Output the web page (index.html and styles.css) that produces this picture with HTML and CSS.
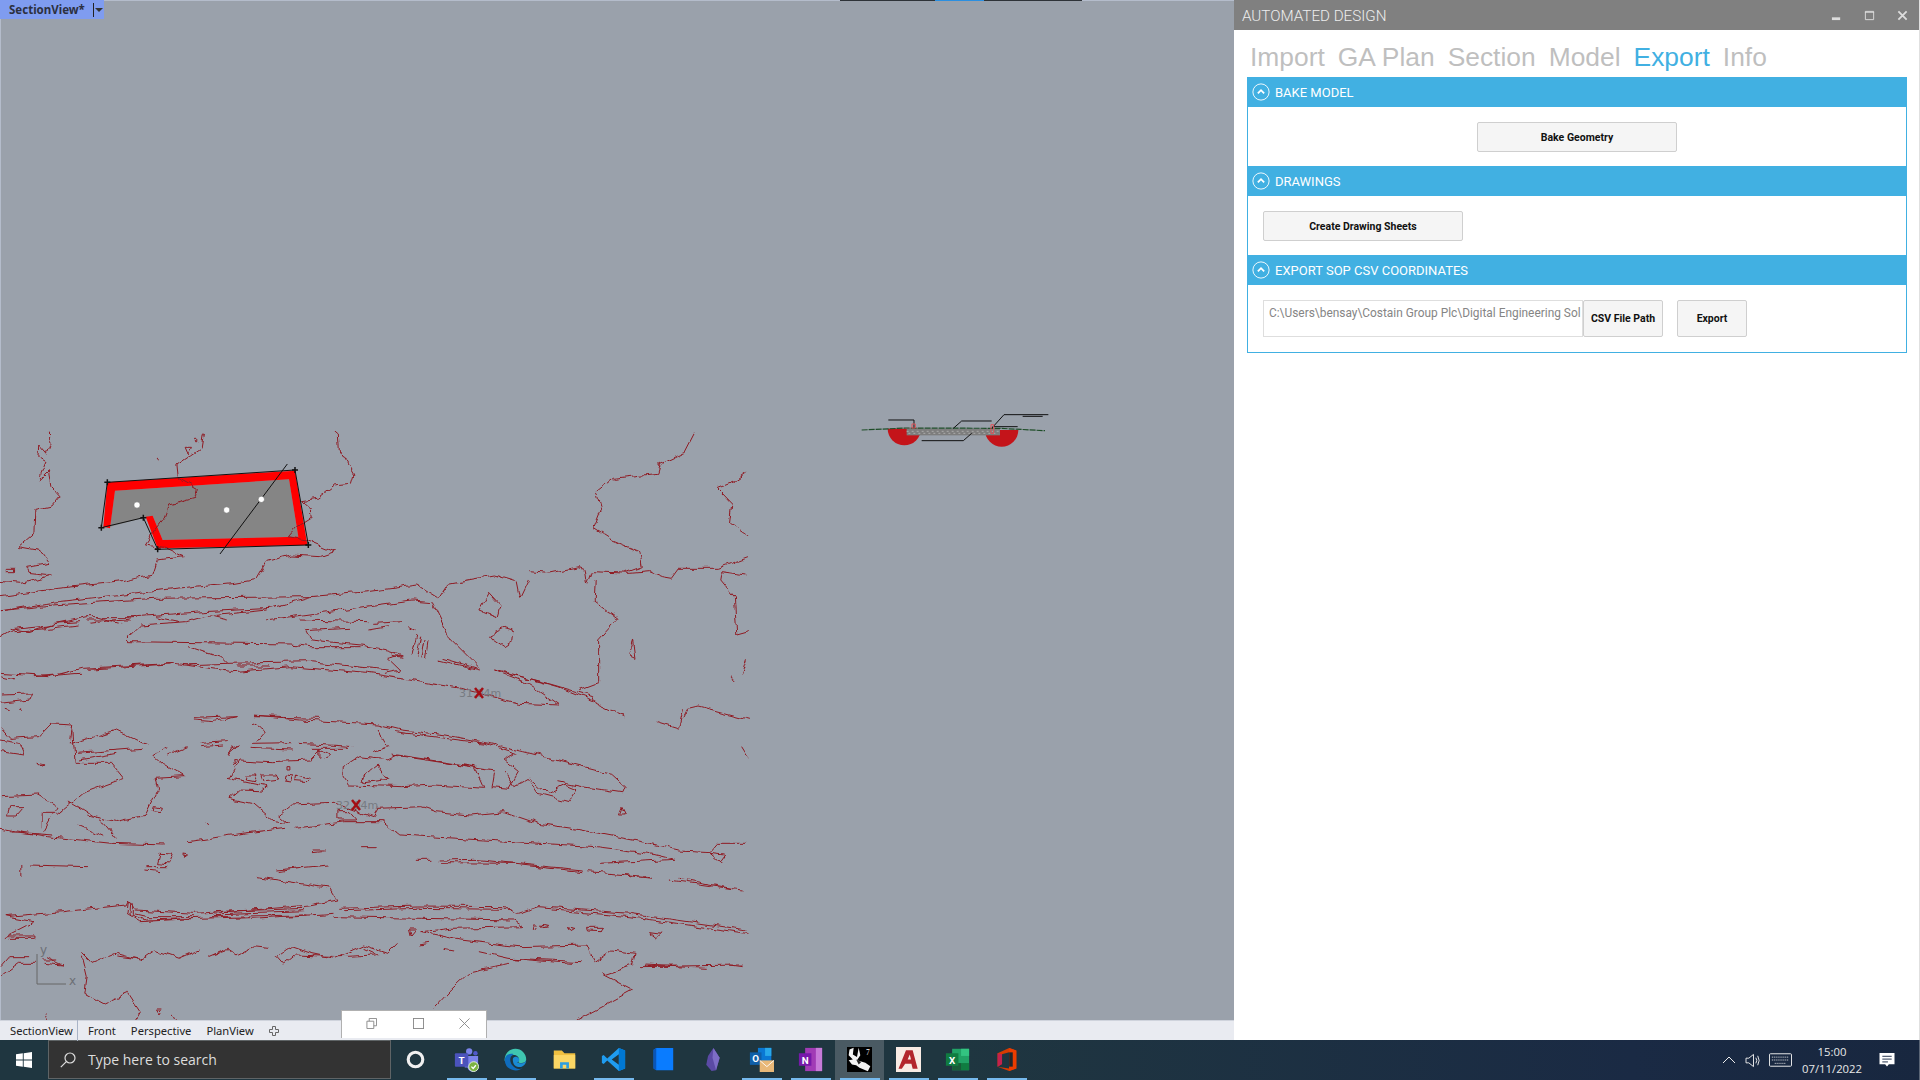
FILE: index.html
```html
<!DOCTYPE html>
<html lang="en">
<head>
<meta charset="utf-8">
<title>Automated Design</title>
<link rel="stylesheet" href="styles.css">
</head>
<body>
<div class="app">
  <div class="work">
    <section class="viewport">
      <div class="canvas">
        <svg class="scene" viewBox="0 0 1234 1020" xmlns="http://www.w3.org/2000/svg">
          <defs>
            <filter id="wobble" filterUnits="userSpaceOnUse" x="0" y="400" width="760" height="630" color-interpolation-filters="sRGB">
              <feTurbulence type="fractalNoise" baseFrequency="0.09" numOctaves="2" seed="4" result="n"/>
              <feDisplacementMap in="SourceGraphic" in2="n" scale="7" xChannelSelector="R" yChannelSelector="G"/>
            </filter>
          </defs>
          <!-- polygon -->
          <g transform="translate(0 420) scale(.33333)">
            <polygon class="poly-fill" points="345,212 867,178 895,350 488,360 458,287 430,293 330,320"/>
            <polygon class="poly-red" points="322,187 885,152 922,375 473,385 437,290 458,287 488,360 895,350 867,178 345,212 330,325 310,320"/>
          </g>
          <g class="wobbly">
          <!-- contours from upper crop -->
          <g transform="translate(0 420) scale(.48473 .33333)" class="contour">
            <path d="M102,38 L103,70 L95,100 L80,75 L78,110 L95,125 L85,160 L82,183 L100,158 L105,200 L122,228 L105,258 L72,268 L70,340 L38,380 L85,392 L104,430 L55,442 L60,457 L108,465 L70,480 L45,490 L2,484"/>
            <path d="M15,445 L30,445 L30,455 L15,455 Z"/>
            <path d="M420,38 L415,85 L395,105 L365,135 L368,175 L405,205 L400,235 L350,255 L340,295 L318,335 L300,375 L340,385 L378,410 L325,420 L315,465 L250,485 L120,505 L2,530"/>
            <path d="M382,85 L395,85 L388,105 Z M403,58 L408,58 L408,68 L403,68 Z M323,115 L328,125"/>
            <path d="M690,35 L698,45 L700,90 L730,165 L725,190 L690,195 L655,235 L622,242 L640,265 L642,295 L610,325 L595,350 L632,360 L690,395 L660,410 L600,405 L550,425 L530,475 L480,488 L330,510 L120,545 L2,572"/>
            <path d="M1432,38 L1410,100 L1360,135 L1355,160 L1265,175 L1230,215 L1240,270 L1225,325 L1262,360 L1320,395 L1325,440 L1290,458"/>
            <path d="M1092,455 L1130,460 L1195,440 L1205,445 L1210,495 L1220,455 L1300,460 L1340,455 L1365,470 L1385,475 L1400,445 L1480,445 L1545,410"/>
            <path d="M1230,475 L1228,545 L1275,595 L1235,660 L1235,790 L1195,812"/>
            <path d="M1540,160 L1515,185 L1480,205 L1510,250 L1505,310 L1545,350"/>
            <path d="M1490,455 L1540,465 M1490,455 L1487,480 L1515,530 L1520,645 L1545,635"/>
            <path d="M2,572 L110,555 L320,535 L640,530 L760,515 L860,495 L905,535 L925,490 L1020,465 L1065,485 L1072,535 L1090,480"/>
            <path d="M2,650 L30,625 L100,615 L150,600 L180,590 L280,590 L420,575 L560,565 L640,530"/>
            <path d="M550,600 L700,570 L850,540 L890,545 L925,650 L990,745"/>
            <path d="M265,650 L290,615 L385,605 L420,590 L550,570 M265,650 L265,665 L600,672 L640,680 L745,680"/>
            <path d="M390,680 L460,715 L470,730 L640,725 L800,750 M630,632 L640,660 L745,675 L800,690 L830,705 L800,715 L825,750 L790,760"/>
            <path d="M2,760 L100,770 L170,745 L360,730 L480,755 L600,740 L760,760 L950,805 L1070,850 L1155,855 L1090,790 L1020,750"/>
            <path d="M1020,750 L1130,790 L1225,830 L1230,850 L1290,890 M1040,755 L1150,800 L1230,845"/>
            <path d="M1010,520 L990,570 L1025,590 L1032,555 Z M1010,645 L1040,625 L1062,635 L1060,660 L1040,680 L1015,655 Z M1305,660 L1295,705 L1310,715 Z"/>
            <path d="M1410,895 L1420,865 L1440,858 L1545,898 M1530,760 L1540,715 M1505,770 L1518,780"/>
            <path d="M20,625 L60,635 L110,610 L165,605 M30,635 L100,625 L160,615 M180,600 L270,600 M185,610 L280,592 M200,590 L250,612 M320,590 L370,605 M440,590 L470,600"/>
            <path d="M620,600 L760,605 M770,610 L830,605 M760,630 L800,620 M840,620 L855,632 M630,632 L720,625"/>
            <path d="M860,645 L850,705 M868,650 L860,710 M877,655 L870,715 M885,660 L880,715 M905,720 L990,750 M915,715 L985,745 M810,705 L830,712"/>
            <path d="M2,770 L30,780 M70,770 L165,760 M180,748 L350,732 M375,735 L470,730 M490,738 L555,738"/>
            <path d="M2,825 L65,822 L60,840 L2,850 M10,868 L20,872 M40,865 L45,872 M400,895 L490,890 M520,890 L660,895"/>
          </g>
          <!-- contours from lower crop -->
          <g transform="translate(0 700) scale(.48473 .33333)" class="contour">
            <path d="M2,85 L20,115 L80,110 L105,72 L150,75 L145,130 M2,120 L40,130 L50,165 L2,155"/>
            <path d="M400,60 L440,65 L490,50 M520,48 L620,60 L780,72 L830,90 L920,105 L1010,130 L1080,155 L1260,220 L1290,260 L1285,278 L1200,260 L1150,245"/>
            <path d="M1060,160 L1040,180 L1070,215 L1050,265 L1015,260 L1020,215"/>
            <path d="M1040,215 L1060,260 L1090,235 L1110,280 L1175,305 L1190,270 L1165,255 L1130,280 L1095,235"/>
            <path d="M520,70 L548,95 L530,125 M780,90 L800,140 L770,155 M815,95 L1000,130 L1065,160"/>
            <path d="M415,130 L470,125 M415,140 L460,135 M520,130 L600,128 M515,145 L600,150 M615,130 L680,135 L730,140 M640,145 L720,145 M660,145 L660,175"/>
            <path d="M470,240 L495,180 L560,185 L640,180 L660,150 L680,165 L670,180 M470,165 L480,140 L490,135 L470,160"/>
            <path d="M510,225 L530,225 L525,245 L508,240 Z M540,225 L570,225 L575,240 L545,245 Z M590,225 L605,228 L600,243 L588,240 Z M612,225 L640,235 L635,245 L610,242 Z M590,200 L598,200 L598,210 L590,210 Z M480,185 L488,185 L482,197 Z"/>
            <path d="M470,235 L550,260 L540,272 L490,270 L470,295 L520,310 L565,365 L595,370 L575,345 L600,315 L690,310 L770,350 L780,325 L870,320 L900,335 L970,345 L1040,335 L1110,370 L1180,385 L1270,410 L1340,430 L1400,450 L1465,455 L1480,430 L1540,430"/>
            <path d="M1465,460 L1485,485 L1495,465 Z M2,385 L100,410 L230,430 L340,435 M390,425 L500,400 L590,385 M610,385 L710,365 L790,365 L825,405 L1000,420 L1230,440 L1340,460 L1390,478"/>
            <path d="M695,335 L720,335 L735,360 L695,360 Z"/>
            <path d="M708,200 L740,170 L800,180 L820,165 L980,200 L1000,265 L900,255 L830,260 L720,255 L708,230 Z M740,240 L780,195 L800,235 L750,245 Z M810,165 L1020,210"/>
            <path d="M150,90 L155,190 L230,190 L255,235 L170,280 L145,310 L120,340 L85,340 L85,385 M150,130 L240,90 L305,135 M160,160 L290,145 M165,180 L240,160"/>
            <path d="M345,140 L315,165 L335,190 L380,230 L320,235 L325,270 L300,345 L240,365 L180,345 M385,140 L345,165"/>
            <path d="M2,290 L80,285 L120,320 L90,395 M140,300 L175,330 L215,370 L240,415 M160,375 L215,410 M20,395 L110,405 M20,320 L50,320 L35,345 L15,345 Z"/>
            <path d="M78,190 L95,195 L85,198 Z M318,320 L335,325 L332,338 L316,335 Z M425,368 L430,378 M1283,325 L1290,345 L1278,345 Z"/>
            <path d="M330,460 L358,462 L350,492 L325,488 Z M375,462 L387,465 L380,472 Z"/>
            <path d="M645,450 L670,450 M645,458 L665,455 M745,440 L775,440 M45,495 L45,530 M60,495 L180,500 M300,500 L345,500 M300,510 L330,515"/>
            <path d="M860,478 L890,478 M905,480 L980,478 L1200,510 M910,488 L1060,490 M1075,495 L1200,515 M1240,490 L1390,478 M1210,515 L1340,530 M1285,525 L1345,535 M1380,540 L1530,570 M1400,535 L1510,565 M570,510 L680,495 M575,515 L620,505"/>
            <path d="M530,530 L680,565 L695,600 L640,615 L520,630 L400,640 L280,630 L265,600 L260,615 L130,635 L10,650 L70,665 L10,710 M20,705 L70,705 L70,712 L20,712"/>
            <path d="M265,600 L262,640 L290,665 L400,655 M270,605 L268,642 L300,660 L520,650 M275,610 L275,640 L305,650 L400,650"/>
            <path d="M440,635 L630,625 M440,642 L630,632 M430,650 L630,645 M520,655 L690,640"/>
            <path d="M700,625 L860,618 L1040,620 L1070,640 L1110,620 L1300,640 L1540,690 M710,632 L860,625 L1050,628 M1140,630 L1300,650 L1540,700"/>
            <path d="M690,650 L870,655 L1060,660 L1080,680 L930,685 L870,695 L950,720 L1070,740 L1210,735 L1225,785 L1260,750 L1310,760 L1305,795 L1245,825 L1305,870 L1190,960"/>
            <path d="M1100,675 L1108,675 L1105,688 L1098,685 Z M1115,675 L1130,680 L1120,683 Z M1168,680 L1188,685 L1180,692 Z M1208,685 L1245,685 L1240,695 L1210,693 Z M1340,698 L1365,703 L1355,715 Z M845,690 L858,690 L848,708 Z"/>
            <path d="M1320,800 L1530,795 M1330,795 L1460,805 M1505,795 L1530,800 M990,755 L1050,775 L1180,790 M1060,775 L1200,785 M1050,790 L970,815 L930,870 L895,925"/>
            <path d="M170,760 L190,790 L240,760 L290,780 L320,750 L370,775 L410,750 M430,770 L470,745 L490,765 L525,740 L555,745"/>
            <path d="M570,770 L600,740 L640,760 L690,775 L750,735 L800,760 L820,730 M570,770 L585,795 L610,765 L700,770 L775,765 M240,768 L295,778 M440,765 L470,750 M750,745 L780,765"/>
            <path d="M170,770 L180,830 L175,880 L215,912 L265,880 L290,935 L280,960 M2,800 L20,770 L60,770 M2,830 L40,790 L70,790 M95,940 L100,960 M90,790 L130,795 L95,770 M85,780 L120,780 M325,930 L335,930 L330,942 Z M350,945 L365,955"/>
            <path d="M1410,25 L1400,85 L1355,65 M1530,140 L1545,175"/>
            <path d="M865,735 L885,730 M915,745 L935,750"/>
          </g>
          </g>
          <!-- polygon outline on top -->
          <g transform="translate(0 420) scale(.33333)">
            <polygon class="poly-line" points="322,187 885,150 925,375 473,388 430,293 304,323"/>
            <line class="poly-line" x1="862" y1="132" x2="660" y2="402"/>
            <circle class="dot" cx="411" cy="255" r="9.500"/>
            <circle class="dot" cx="680" cy="270" r="9.500"/>
            <circle class="dot" cx="784" cy="238" r="9.500"/>
            <path class="grip" d="M322,178 v18 M313,187 h18 M885,141 v18 M876,150 h18 M925,366 v18 M916,375 h18 M473,379 v18 M464,388 h18 M430,284 v18 M421,293 h18 M304,314 v18 M295,323 h18"/>
          </g>
          <!-- cross section -->
          <g transform="translate(840 400) scale(.33333)">
            <path class="section-red" d="M143,86 H243 A50,50 0 0 1 143,86 Z"/>
            <path class="section-red" d="M435,90 H535 A50,50 0 0 1 435,90 Z"/>
            <rect class="section-grey" x="200" y="86" width="280" height="20"/>
            <path class="section-dash" d="M200,94 H480 M205,100 H470"/>
            <path class="section-green" d="M65,90 L200,84 L480,85 L615,92"/>
            <path class="section-black" d="M145,60 H222 V85 M340,85 L365,63 H455 M245,122 H370 L395,100 M455,85 L492,44 H625 M548,49 H608 M458,80 H533"/>
            <rect class="section-mark" x="216" y="72" width="10" height="12"/>
            <rect class="section-mark" x="453" y="74" width="8" height="26"/>
          </g>
          <!-- axis and dimension marks -->
          <path class="axis" d="M37,954 V984 H66"/>
          <text class="axis-label" x="40" y="954">y</text>
          <text class="axis-label" x="69" y="985">x</text>
          <text class="ghost" x="459" y="697">31.04m</text>
          <text class="ghost" x="336" y="809">32.04m</text>
          <path class="mark" d="M475,688 L483,698 M483,688 L475,698"/>
          <path class="mark" d="M352,800 L360,810 M360,800 L352,810"/>
        </svg>
        <div class="view-tag"><span>SectionView*</span><i class="view-sep"></i><i class="view-arrow"></i></div>
      </div>
      <nav class="view-tabs">
        <span class="view-tab view-tab-on">SectionView</span>
        <span class="view-tab">Front</span>
        <span class="view-tab">Perspective</span>
        <span class="view-tab">PlanView</span>
        <svg class="view-add" viewBox="0 0 10 10"><path d="M3.500,.5 h3 v3 h3 v3 h-3 v3 h-3 v-3 h-3 v-3 h3 Z"/></svg>
      </nav>
    </section>

    <aside class="panel">
      <header class="panel-title">
        <span>AUTOMATED DESIGN</span>
        <div class="win-btns">
          <svg viewBox="0 0 12 12"><rect x="1" y="8" width="9" height="3"/></svg>
          <svg viewBox="0 0 12 12"><path d="M1.500,1.500 h9 v9 h-9 Z M1,2.500 h10" class="win-stroke"/></svg>
          <svg viewBox="0 0 12 12"><path d="M1.500,1.500 L10.500,10.500 M10.500,1.500 L1.500,10.500" class="win-stroke win-thick"/></svg>
        </div>
      </header>
      <nav class="tabs">
        <span>Import</span><span>GA Plan</span><span>Section</span><span>Model</span><span class="tab-on">Export</span><span>Info</span>
      </nav>
      <div class="sections">
        <div class="section-head">
          <svg class="chev" viewBox="0 0 20 20"><circle cx="10" cy="10" r="9"/><path d="M6.500,11.500 L10,8 L13.500,11.500"/></svg>
          <span>BAKE MODEL</span>
        </div>
        <div class="section-body body-center">
          <button class="btn btn-wide">Bake Geometry</button>
        </div>
        <div class="section-head">
          <svg class="chev" viewBox="0 0 20 20"><circle cx="10" cy="10" r="9"/><path d="M6.500,11.500 L10,8 L13.500,11.500"/></svg>
          <span>DRAWINGS</span>
        </div>
        <div class="section-body">
          <button class="btn btn-wide">Create Drawing Sheets</button>
        </div>
        <div class="section-head">
          <svg class="chev" viewBox="0 0 20 20"><circle cx="10" cy="10" r="9"/><path d="M6.500,11.500 L10,8 L13.500,11.500"/></svg>
          <span>EXPORT SOP CSV COORDINATES</span>
        </div>
        <div class="section-body body-export">
          <div class="path-field">C:\Users\bensay\Costain Group Plc\Digital Engineering Sol</div>
          <button class="btn btn-csv">CSV File Path</button>
          <button class="btn btn-export">Export</button>
        </div>
      </div>
    </aside>
  </div>

  <footer class="taskbar">
    <div class="start">
      <svg viewBox="0 0 16 16"><path d="M0,2.300 L6.800,1.300 V7.500 H0 Z M7.700,1.200 L16,0 V7.500 H7.700 Z M0,8.500 H6.800 V14.700 L0,13.700 Z M7.700,8.500 H16 V16 L7.700,14.800 Z"/></svg>
    </div>
    <div class="search">
      <svg viewBox="0 0 16 16"><circle cx="10" cy="6" r="5"/><path d="M6.300,9.700 L.8,15.200"/></svg>
      <span>Type here to search</span>
    </div>
    <div class="apps">
      <div class="app-slot slot-first"><svg viewBox="0 0 24 24"><circle cx="12" cy="12" r="7" class="cortana"/></svg></div>
      <div class="app-slot on"><svg viewBox="0 0 28 28">
        <circle cx="17" cy="5" r="3.500" fill="#7b83eb"/><circle cx="24" cy="7" r="2.500" fill="#5059c9"/>
        <path d="M12,10 H27 V20 A6,6 0 0 1 15,23 H12 Z" fill="#7b83eb"/>
        <rect x="1" y="7" width="15" height="15" rx="1" fill="#4b53bc"/>
        <text x="8.500" y="19" class="icon-letter" font-size="12">T</text>
        <circle cx="22" cy="22" r="5.500" fill="#7cb342" stroke="#e8f5e0"/>
        <path d="M19.500,22 L21.500,24 L24.500,20.500" fill="none" stroke="#fff" stroke-width="1.500"/>
      </svg></div>
      <div class="app-slot on"><svg viewBox="0 0 28 28">
        <path d="M14,2 A12,12 0 0 1 26,14 C26,18 20,19 17,17 C20,12 15,8 11,9 C6,10 3,14 2,16 A12,12 0 0 1 14,2 Z" fill="#3fc6b0"/>
        <path d="M2,15 C2,8 8,7 12,8 C7,10 7,17 11,21 C14,25 20,26 23,22 A12,12 0 0 1 2,15 Z" fill="#0f6cbd"/>
        <path d="M11,14 C11,10 16,10 18,13 C19,16 17,17 16,17 C18,19 24,19 26,15 C26,20 20,24 16,22 C12,21 11,17 11,14 Z" fill="#1a8ad4"/>
      </svg></div>
      <div class="app-slot"><svg viewBox="0 0 28 28">
        <path d="M2,4 H11 L14,7 H26 V24 H2 Z" fill="#f0c040"/>
        <rect x="2" y="9" width="24" height="15" fill="#fbd765"/>
        <path d="M9,24 V17 H19 V24 H16 V20 H12 V24 Z" fill="#2e9fe0"/>
      </svg></div>
      <div class="app-slot on"><svg viewBox="0 0 28 28">
        <path d="M20,1 L27,4 V24 L20,27 L7,15 L3,19 L1,18 V10 L3,9 L7,13 Z M20,8 L12,14 L20,20 Z" fill="#1f9cf0"/>
        <path d="M20,1 L27,4 V24 L20,27 Z" fill="#0078d4"/>
      </svg></div>
      <div class="app-slot"><svg viewBox="0 0 28 28">
        <path d="M4,3 L7,1 H26 V26 H7 L4,24 Z" fill="#0a7cff"/>
        <path d="M4,3 L7,1 V26 L4,24 Z" fill="#0a55b8"/>
      </svg></div>
      <div class="app-slot"><svg viewBox="0 0 28 28">
        <path d="M15,1 L22,12 L18,26 L13,27 L7,20 L9,10 Z" fill="#5b4aa5"/>
        <path d="M15,1 L14,12 L18,26 L22,12 Z" fill="#7d6dc6"/>
      </svg></div>
      <div class="app-slot on"><svg viewBox="0 0 28 28">
        <rect x="10" y="1" width="15" height="18" fill="#0a78d4"/><rect x="18" y="1" width="7" height="9" fill="#28a8ea"/>
        <rect x="1" y="6" width="13" height="14" fill="#0f5fa8"/>
        <text x="7.500" y="17" class="icon-letter" font-size="11">O</text>
        <path d="M12,15 H28 V28 H12 Z" fill="#e8b878"/>
        <path d="M12,15 L20,22 L28,15" fill="none" stroke="#fff" stroke-width="1"/>
      </svg></div>
      <div class="app-slot on"><svg viewBox="0 0 28 28">
        <rect x="8" y="1" width="19" height="26" fill="#a13bb5"/><rect x="20" y="1" width="7" height="26" fill="#c77ad8"/>
        <rect x="1" y="7" width="14" height="14" fill="#7719aa"/>
        <text x="8" y="18.500" class="icon-letter" font-size="11">N</text>
      </svg></div>
      <div class="app-slot slot-active on"><svg viewBox="0 0 30 30">
        <rect width="30" height="30" fill="#000"/>
        <path d="M3,3 L8,1 L7,9 L12,12 L14,1 L16,10 L12,16 L22,19 L28,23 L25,29 L15,25 L11,22 L6,21 L2,16 L7,15 L2,10 Z" fill="#f4f4f4"/>
        <path d="M11,15 L17,18 L14,21 Z" fill="#222"/>
        <text x="25" y="9" class="rhino-seven">7</text>
      </svg></div>
      <div class="app-slot on"><svg viewBox="0 0 30 30">
        <rect width="30" height="30" fill="#f8ebe4"/>
        <path d="M12,4 H20 L26,26 H20 L18.500,20 H11 L7,26 H3 Z M14,15 H18 L16.500,9 Z" fill="#b3262c"/>
      </svg></div>
      <div class="app-slot on"><svg viewBox="0 0 28 28">
        <rect x="8" y="2" width="19" height="24" fill="#21a366"/><rect x="18" y="2" width="9" height="8" fill="#33c481"/><rect x="18" y="18" width="9" height="8" fill="#107c41"/><rect x="8" y="18" width="10" height="8" fill="#185c37"/>
        <rect x="1" y="7" width="14" height="14" fill="#107c41"/>
        <text x="8" y="18.500" class="icon-letter" font-size="11">X</text>
      </svg></div>
      <div class="app-slot on"><svg viewBox="0 0 28 28">
        <path d="M17,1 L25,4 V24 L17,27 L4,22 L17,24 V6 L9,8 V19 L4,22 V7 Z" fill="#d83b01"/>
        <path d="M17,1 L25,4 V24 L17,27 Z" fill="#eb3c00"/>
        <path d="M4,7 L9,8 V19 L4,22 Z" fill="#c4214e"/>
        <path d="M17,6 H21 V22 H17 Z" fill="#20262b"/>
      </svg></div>
    </div>
    <div class="tray">
      <svg class="tray-chevron" viewBox="0 0 14 8"><path d="M1,7 L7,1 L13,7"/></svg>
      <svg class="tray-volume" viewBox="0 0 18 16"><path d="M1,5.500 H4 L9,1.500 V14.500 L4,10.500 H1 Z M11.500,5 Q13.500,8 11.500,11 M13.500,3 Q16.500,8 13.500,13"/></svg>
      <svg class="tray-keys" viewBox="0 0 24 14"><rect x=".5" y=".5" width="23" height="13" rx="1"/><path class="key-dots" d="M3,4 H21 M3,7 H21 M6,10.500 H18"/></svg>
      <div class="clock"><span>15:00</span><span>07/11/2022</span></div>
      <svg class="tray-note" viewBox="0 0 16 16"><path d="M0,0 H16 V12 H10 L8,14.500 L6,12 H0 Z"/><path class="note-lines" d="M3,3.500 H13 M3,6.500 H13 M3,9.500 H9"/></svg>
    </div>
  </footer>

  <div class="float-win">
    <svg viewBox="0 0 12 12"><path d="M1,3.500 h7.500 v8 h-7.500 Z M3.500,3.500 v-3 h8 v8 h-3"/></svg>
    <svg viewBox="0 0 12 12"><rect x=".5" y=".5" width="11" height="11"/></svg>
    <svg viewBox="0 0 12 12"><path d="M.5,.5 L11.500,11.500 M11.500,.5 L.5,11.500"/></svg>
  </div>
  <div class="top-strip"><i></i></div>
</div>
</body>
</html>
```

FILE: styles.css
```css
* { box-sizing: border-box; }
html, body { margin: 0; height: 100%; overflow: hidden; }
body { font-family: Roboto, "Liberation Sans", sans-serif; background: #9aa1ab; }
.app { width: 1920px; height: 1080px; display: flex; flex-direction: column; position: relative; }
.work { flex: 1; display: flex; min-height: 0; }

/* viewport */
.viewport { flex: 0 0 1234px; display: flex; flex-direction: column; }
.canvas { flex: 1; position: relative; background: #9aa1ab; border-left: 1px solid #b4bccb; border-top: 1px solid #b4bccb; }
.scene { position: absolute; left: -1px; top: -1px; width: 1234px; height: 1020px; display: block; }
.wobbly { filter: url(#wobble); }
.contour path { fill: none; stroke: #8f1a22; stroke-width: 1; vector-effect: non-scaling-stroke; stroke-linejoin: round; }
.poly-fill { fill: #858585; }
.poly-red { fill: #ff0000; }
.poly-line { fill: none; stroke: #111; stroke-width: 1; vector-effect: non-scaling-stroke; }
.dot { fill: #fff; stroke: #555; stroke-width: .5; vector-effect: non-scaling-stroke; }
.grip { fill: none; stroke: #111; stroke-width: 1.500; vector-effect: non-scaling-stroke; }
.section-red { fill: #c4141a; }
.section-grey { fill: #7d7d7d; }
.section-dash { fill: none; stroke: #aaa; stroke-width: 1; stroke-dasharray: 2 3; vector-effect: non-scaling-stroke; }
.section-green { fill: none; stroke: #1e4d28; stroke-width: 1.200; stroke-dasharray: 6 1; vector-effect: non-scaling-stroke; }
.section-black { fill: none; stroke: #111; stroke-width: 1; vector-effect: non-scaling-stroke; }
.section-mark { fill: none; stroke: #e0555a; stroke-width: 1; vector-effect: non-scaling-stroke; }
.axis { fill: none; stroke: #666; stroke-width: 1; }
.axis-label { font: 12px "DejaVu Sans", sans-serif; fill: #6c6f75; }
.ghost { font: 11px "DejaVu Sans", sans-serif; fill: #777b82; }
.mark { fill: none; stroke: #a30d14; stroke-width: 2.500; }
.view-tag { position: absolute; left: -1px; top: -1px; width: 104px; height: 19px; background: #7f9cf0; display: flex; align-items: center; padding-left: 9px; font: 700 11.500px "Noto Sans", sans-serif; color: #2c3040; }
.view-sep { position: absolute; left: 93px; top: 3px; width: 1px; height: 14px; background: #222; }
.view-arrow { position: absolute; left: 95px; top: 8px; border-left: 4px solid transparent; border-right: 4px solid transparent; border-top: 4px solid #333; }
.view-tabs { flex: 0 0 20px; background: #e9ebf1; border-top: 1px solid #cfd3dc; display: flex; align-items: center; gap: 15px; padding-left: 10px; font: 11.200px "Noto Sans", sans-serif; color: #222; }
.view-tab { white-space: nowrap; }
.view-tab-on { position: relative; }
.view-tab-on::after { content: ""; position: absolute; right: -5px; top: -3px; bottom: -3px; width: 1px; background: #a9b3c6; }
.view-add { width: 10px; height: 10px; margin-left: 0; fill: none; stroke: #666; stroke-width: 1; }

/* panel */
.panel { flex: 1; background: #fff; display: flex; flex-direction: column; border-right: 1px solid #e0e0e0; }
.panel-title { flex: 0 0 30px; background: #808080; color: #eee; display: flex; align-items: center; justify-content: space-between; padding: 1px 9px 0 8px; font-size: 15.200px; font-weight: 300; }
.win-btns { display: flex; gap: 22px; margin-right: 2px; }
.win-btns svg { width: 11px; height: 11px; fill: #ddd; }
.win-stroke { fill: none; stroke: #ddd; stroke-width: 1; }
.win-thick { stroke-width: 2; }
.tabs { display: flex; gap: 13px; height: 47px; padding: 12px 0 0 16px; font: 26.400px/30px "Liberation Sans", sans-serif; color: #bfbfbf; }
.tab-on { color: #41b0e2; }
.sections { margin: 0 12px 0 13px; border: 1px solid #41b0e2; border-top: 0; }
.section-head { height: 30px; margin: 0 -1px; background: #41b0e2; color: #fff; display: flex; align-items: center; gap: 5px; padding-left: 5px; font-size: 13px; }
.chev { width: 18px; height: 18px; fill: none; stroke: #fff; stroke-width: 1; }
.chev path { stroke-width: 2; }
.section-body { height: 59px; padding: 15px 15px 0; }
.body-center { display: flex; justify-content: center; }
.body-export { display: flex; height: 67px; }
.btn { height: 30px; background: #f5f5f5; border: 1px solid #cfcfcf; border-radius: 2px; font: 700 10.500px Roboto, sans-serif; color: #111; padding: 0; white-space: nowrap; overflow: hidden; }
.btn-wide { width: 200px; }
.path-field { width: 320px; height: 37px; border: 1px solid #dedede; padding: 5px 0 0 5px; font-size: 11.900px; line-height: 15px; color: #858585; white-space: nowrap; overflow: hidden; }
.btn-csv { width: 80px; height: 37px; }
.btn-export { width: 70px; height: 37px; margin-left: 14px; }

/* taskbar */
.taskbar { flex: 0 0 40px; display: flex; background: linear-gradient(90deg, #1f3640 0%, #1f3640 50%, #1a2a44 85%, #18273f 100%); color: #eee; }
.start { width: 48px; display: flex; align-items: center; justify-content: center; }
.start svg { width: 16px; height: 16px; fill: #fff; }
.search { width: 343px; height: 39px; background: #333; border: 1px solid #5f6466; display: flex; align-items: center; gap: 12px; padding-left: 11px; font: 14px "Open Sans", sans-serif; color: #ddd; }
.search svg { width: 16px; height: 16px; fill: none; stroke: #ddd; stroke-width: 1.200; }
.apps { display: flex; }
.app-slot { width: 49.100px; height: 40px; display: flex; align-items: center; justify-content: center; position: relative; }
.slot-first { width: 51px; padding-right: 2px; }
.app-slot svg { width: 25px; height: 25px; margin-bottom: 1px; }
.slot-active { background: #4a5a63; }
.app-slot.on::after { content: ""; position: absolute; left: 5px; right: 4px; bottom: 0; height: 2px; background: #76b9ed; }
.cortana { fill: none; stroke: #f0f0f0; stroke-width: 3; }
.icon-letter { font: 700 11px Roboto, sans-serif; fill: #fff; text-anchor: middle; }
.rhino-seven { font: 9px "Liberation Serif", serif; fill: #fff; text-anchor: middle; }
.tray { margin-left: auto; flex: 0 0 200px; display: flex; align-items: center; border-right: 1px solid #5a6575; padding-left: 2px; }
.tray svg { fill: none; stroke: #eee; stroke-width: 1; flex: none; }
.tray-chevron { width: 14px; height: 8px; stroke-width: 1.200; }
.tray-volume { width: 17px; height: 15px; margin-left: 9px; }
.tray-keys { width: 23px; height: 14px; margin-left: 7px; }
.key-dots { stroke-dasharray: 1 1; }
.clock { display: flex; flex-direction: column; align-items: center; flex: 0 0 60px; margin-left: 10px; font: 11.300px/17.500px "Open Sans", sans-serif; color: #e8e8e8; }
.tray svg.tray-note { width: 16px; height: 15px; margin-left: 17px; fill: #fff; stroke: none; }
.note-lines { fill: none; stroke: #1a2a44; stroke-width: 1; }

/* overlays */
.float-win { position: absolute; left: 341px; top: 1010px; width: 146px; height: 28px; background: #fff; border: 1px solid #b0b0b0; border-bottom: 0; display: flex; align-items: center; justify-content: space-between; padding: 0 16px 2px 24px; }
.float-win svg { width: 11px; height: 11px; fill: none; stroke: #888; stroke-width: 1; }
.top-strip { position: absolute; left: 840px; top: 0; width: 242px; height: 1px; background: #2e3338; }
.top-strip i { display: block; width: 49px; height: 1px; margin-left: 95px; background: #2b8fe0; }
```
